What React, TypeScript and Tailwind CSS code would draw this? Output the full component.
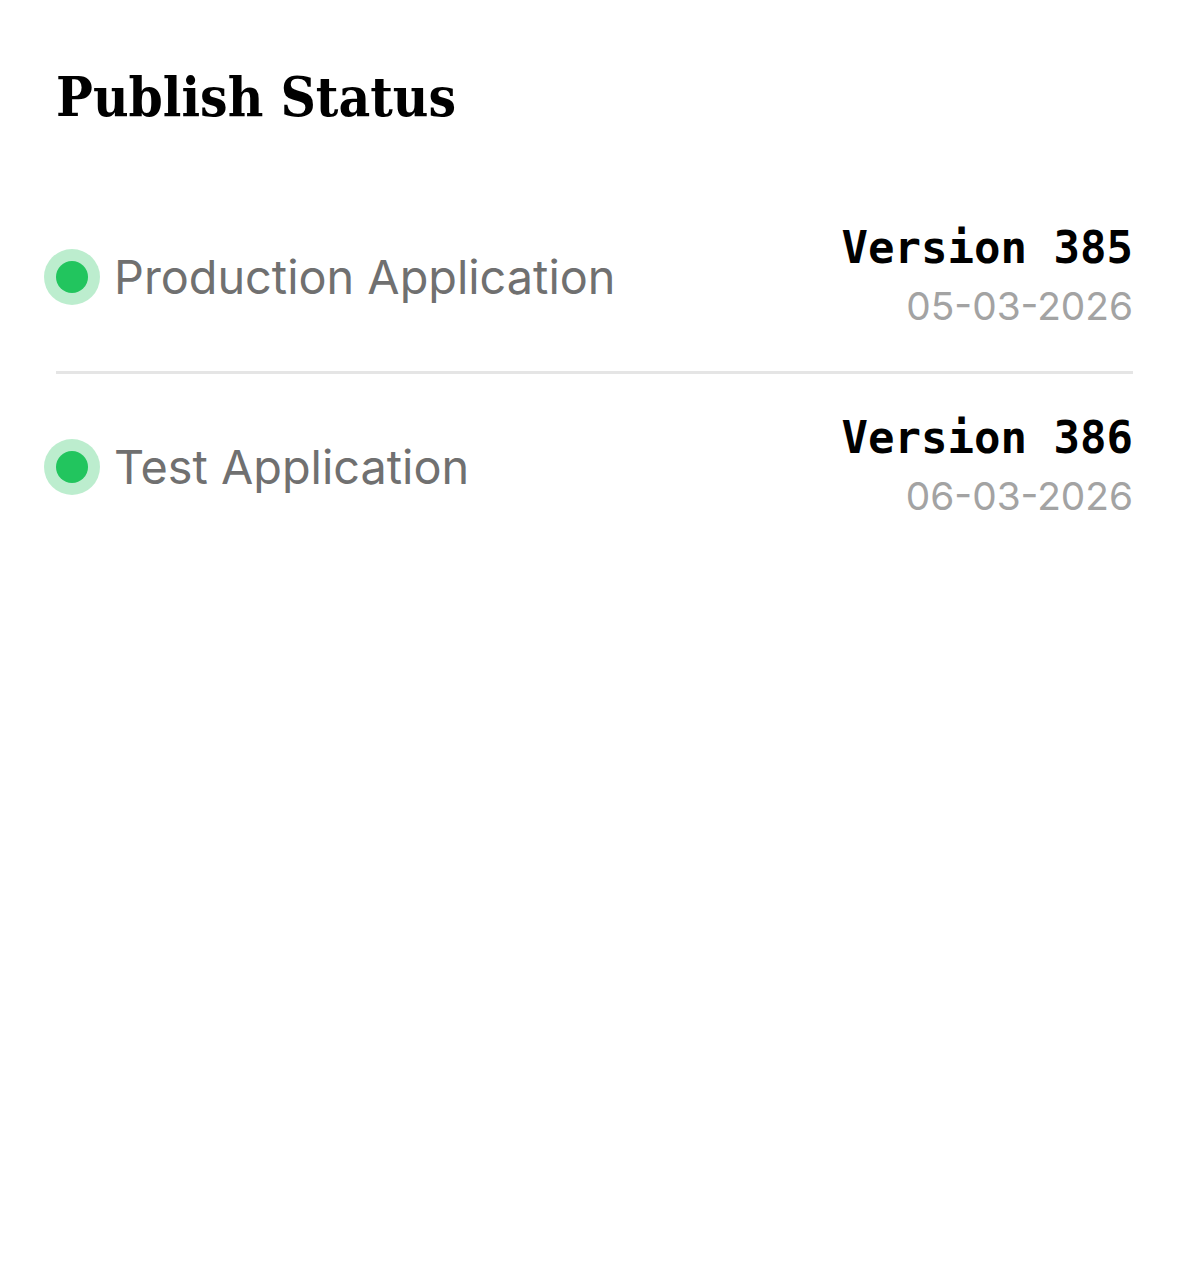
import React from "react";

const rows = [
  { name: "Production Application", version: "Version 385", date: "05-03-2026" },
  { name: "Test Application", version: "Version 386", date: "06-03-2026" },
];

export default function App() {
  return (
    <div className="min-h-screen bg-white">
      <div className="pl-[56px] pr-[53px] pt-[65px]">
        <h2 className="font-['DejaVu_Serif_Condensed','DejaVu_Serif',serif] font-stretch-condensed font-bold text-[54.5px] leading-[65px] text-black">
          Publish Status
        </h2>
        <div className="mt-[90px]">
          {rows.map((r, i) => (
            <div
              key={r.name}
              className={
                i === 0
                  ? "flex items-center justify-between pb-[37px] border-b-[3px] border-[#e5e5e5]"
                  : "flex items-center justify-between pt-[36px]"
              }
            >
              <div className="flex items-center gap-[26px]">
                <span className="block w-[32px] h-[32px] rounded-full bg-[#22c55e] shadow-[0_0_0_12px_rgba(34,197,94,0.3)]" />
                <span className="font-['Inter',sans-serif] text-[46.8px] leading-[56px] text-[#707070]">
                  {r.name}
                </span>
              </div>
              <div className="flex flex-col items-end">
                <span className="font-['DejaVu_Sans_Mono',monospace] font-bold text-[44px] leading-[55px] text-black">
                  {r.version}
                </span>
                <span className="mt-[3px] font-['Inter',sans-serif] text-[38.8px] leading-[56px] text-[#a3a3a3]">
                  {r.date}
                </span>
              </div>
            </div>
          ))}
        </div>
      </div>
    </div>
  );
}
